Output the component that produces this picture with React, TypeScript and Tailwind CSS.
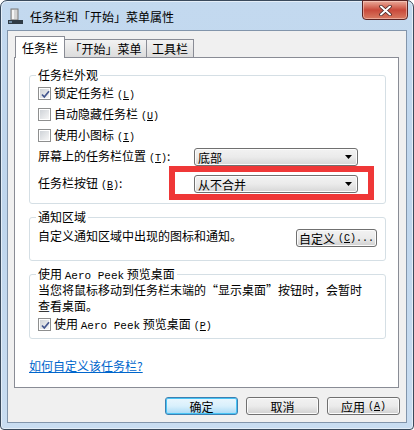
import React from "react";

const cjk = "font-['Noto_Sans_CJK_SC','Noto_Sans',sans-serif]";
const mono = "font-['Liberation_Mono',monospace]";

const Acc = ({ k }: { k: string }) => (
  <span className={`${mono} text-[10px] ml-[3px]`}>
    (<span className="underline">{k}</span>)
  </span>
);

const CheckBox = ({ checked }: { checked?: boolean }) => (
  <div className="w-[13px] h-[13px] border border-[#8e8f8f] bg-white p-px shrink-0">
    <div className="relative w-full h-full bg-gradient-to-br from-[#cfd3d8] to-[#f6f6f6]">
      {checked && (
        <svg width="11" height="11" viewBox="0 0 11 11" className="absolute inset-0">
          <path d="M2 5.5 L4.3 8 L9 2.2" fill="none" stroke="#44578f" strokeWidth="1.7" />
        </svg>
      )}
    </div>
  </div>
);

const Combo = ({ value }: { value: string }) => (
  <div className="relative z-10 w-[164px] h-[18px] flex items-center justify-between rounded-[3px] border border-[#707070] bg-gradient-to-b from-[#f2f2f2] via-[#ebebeb] to-[#d6d6d6] pl-[3px] pr-[5px] shadow-[inset_0_0_0_1px_#fcfcfc]">
    <span className="leading-[15px]">{value}</span>
    <svg width="7" height="4" viewBox="0 0 7 4">
      <path d="M0 0 H7 L3.5 4 Z" fill="#000" />
    </svg>
  </div>
);

const Button = ({ children, primary, w = "w-[73px]" }: { children: React.ReactNode; primary?: boolean; w?: string }) => (
  <div
    className={`${w} h-[18px] flex items-center justify-center rounded-[3px] border leading-[15px] ${
      primary
        ? "border-[#3c7fb1] bg-gradient-to-b from-[#eaf6fd] via-[#d9f0fc] to-[#a7d9f5] shadow-[inset_0_0_0_1px_#48c4f5]"
        : "border-[#707070] bg-gradient-to-b from-[#f2f2f2] via-[#ebebeb] to-[#d0d0d0] shadow-[inset_0_0_0_1px_#fbfbfb]"
    }`}
  >
    {children}
  </div>
);

const Group = ({ label, h, children, mt }: { label: React.ReactNode; h: string; children: React.ReactNode; mt?: string }) => (
  <div className={`relative w-[357px] ${h} ${mt ?? ""} rounded-[3px] border border-[#d5dfe5]`}>
    <div className="absolute -top-[8px] left-[6px] bg-white px-[2px] leading-[14px]">{label}</div>
    {children}
  </div>
);

export default function App() {
  return (
    <div className={`${cjk} text-[12px] text-black w-[414px] h-[430px] flex flex-col rounded-t-[7px] rounded-b-[4px] border border-[#3a4a5c] bg-gradient-to-b from-[#c3d9ef] via-[#bfd6ed] to-[#c9ddf1] px-[6px] pb-[6px] shadow-[inset_0_0_0_1px_#e4eef8]`}>
      {/* title bar */}
      <div className="h-[29px] shrink-0 flex items-center">
        <svg width="15" height="16" viewBox="0 0 15 16" className="ml-[1px]">
          <rect x="3" y="1" width="7" height="11" fill="#d4d4d4" stroke="#7a7a7a" />
          <rect x="4" y="2" width="2" height="9" fill="#f5f5f5" />
          <rect x="0" y="12" width="15" height="4" fill="#2f3a44" />
          <rect x="1" y="13" width="3" height="2" fill="#6d8aa3" />
        </svg>
        <span className="ml-[7px] leading-[15px] mt-[1px]">任务栏和「开始」菜单属性</span>
        <div className="ml-auto self-start -mt-px -mr-px w-[46px] h-[20px] flex items-center justify-center rounded-b-[4px] border border-[#5b2424] bg-gradient-to-b from-[#e9a99a] via-[#c9493b] to-[#d87a62] shadow-[inset_0_0_0_1px_rgba(255,220,210,0.5)]">
          <svg width="13" height="11" viewBox="0 0 13 11">
            <path d="M2 1.5 L11 9.5 M11 1.5 L2 9.5" stroke="#3c1f1f" strokeWidth="3.4" strokeLinecap="round" />
            <path d="M2 1.5 L11 9.5 M11 1.5 L2 9.5" stroke="#ffffff" strokeWidth="2" strokeLinecap="round" />
          </svg>
        </div>
      </div>

      {/* client area */}
      <div className="flex-1 flex flex-col border border-[#8295ab] bg-[#f0f0f0]">
        {/* tabs */}
        <div className="h-[26px] flex items-end pl-[7px]">
          <div className="relative z-10 -mb-px w-[50px] h-[22px] flex items-start justify-center pt-[3px] border border-b-0 border-[#898c95] bg-white leading-[15px]">
            任务栏
          </div>
          <div className="-ml-px w-[83px] h-[18px] flex items-center justify-center border border-b-0 border-[#898c95] bg-gradient-to-b from-[#f3f3f3] to-[#dcdcdc] leading-[15px]">
            「开始」菜单
          </div>
          <div className="-ml-px w-[48px] h-[18px] flex items-center justify-center border border-b-0 border-[#898c95] bg-gradient-to-b from-[#f3f3f3] to-[#dcdcdc] leading-[15px]">
            工具栏
          </div>
        </div>

        {/* tab panel */}
        <div className="ml-[6px] w-[385px] h-[331px] border border-[#898c95] bg-white px-[14px] pt-[17px]">
          <Group label="任务栏外观" h="h-[129px]">
            <div className="pt-[7px] pl-[8px]">
              <div className="h-[21px] flex items-center gap-[3px]">
                <CheckBox checked />
                <span className="leading-[15px]">锁定任务栏<Acc k="L" /></span>
              </div>
              <div className="h-[21px] flex items-center gap-[3px]">
                <CheckBox />
                <span className="leading-[15px]">自动隐藏任务栏<Acc k="U" /></span>
              </div>
              <div className="h-[21px] flex items-center gap-[3px]">
                <CheckBox />
                <span className="leading-[15px]">使用小图标<Acc k="I" /></span>
              </div>
              <div className="mt-[2px] h-[18px] flex items-center">
                <span className="w-[156px] leading-[15px]">屏幕上的任务栏位置<Acc k="T" />:</span>
                <Combo value="底部" />
              </div>
              <div className="mt-[9px] h-[18px] flex items-center">
                <span className="w-[156px] leading-[15px]">任务栏按钮<Acc k="B" />:</span>
                <Combo value="从不合并" />
              </div>
            </div>
            <div className="absolute left-[139px] top-[90px] w-[205px] h-[34px] border-[6px] border-[#ef3737]" />
          </Group>

          <Group label="通知区域" h="h-[44px]" mt="mt-[13px]">
            <div className="pt-[10px] pl-[8px] pr-[8px] flex items-start justify-between">
              <span className="leading-[15px]">自定义通知区域中出现的图标和通知。</span>
              <div className="mt-[1px]">
                <Button w="w-[81px]">
                  自定义<Acc k="C" /><span className={`${mono} text-[10px]`}>...</span>
                </Button>
              </div>
            </div>
          </Group>

          <Group
            label={<span>使用 <span className={`${mono} text-[11px]`}>Aero Peek</span> 预览桌面</span>}
            h="h-[65px]"
            mt="mt-[13px]"
          >
            <div className="pt-[7px] pl-[8px]">
              <p className="leading-[16px]">
                当您将鼠标移动到任务栏末端的“显示桌面”按钮时，会暂时
                <br />
                查看桌面。
              </p>
              <div className="h-[21px] flex items-center gap-[3px]">
                <CheckBox checked />
                <span className="leading-[15px]">
                  使用 <span className={`${mono} text-[11px]`}>Aero Peek</span> 预览桌面<Acc k="P" />
                </span>
              </div>
            </div>
          </Group>

          <div className="mt-[19px] leading-[15px] text-[#0066cc] underline">如何自定义该任务栏?</div>
        </div>

        {/* dialog buttons */}
        <div className="mt-[9px] flex justify-end gap-[8px] pr-[6px]">
          <Button primary>确定</Button>
          <Button>取消</Button>
          <Button>
            应用<Acc k="A" />
          </Button>
        </div>
      </div>
    </div>
  );
}
